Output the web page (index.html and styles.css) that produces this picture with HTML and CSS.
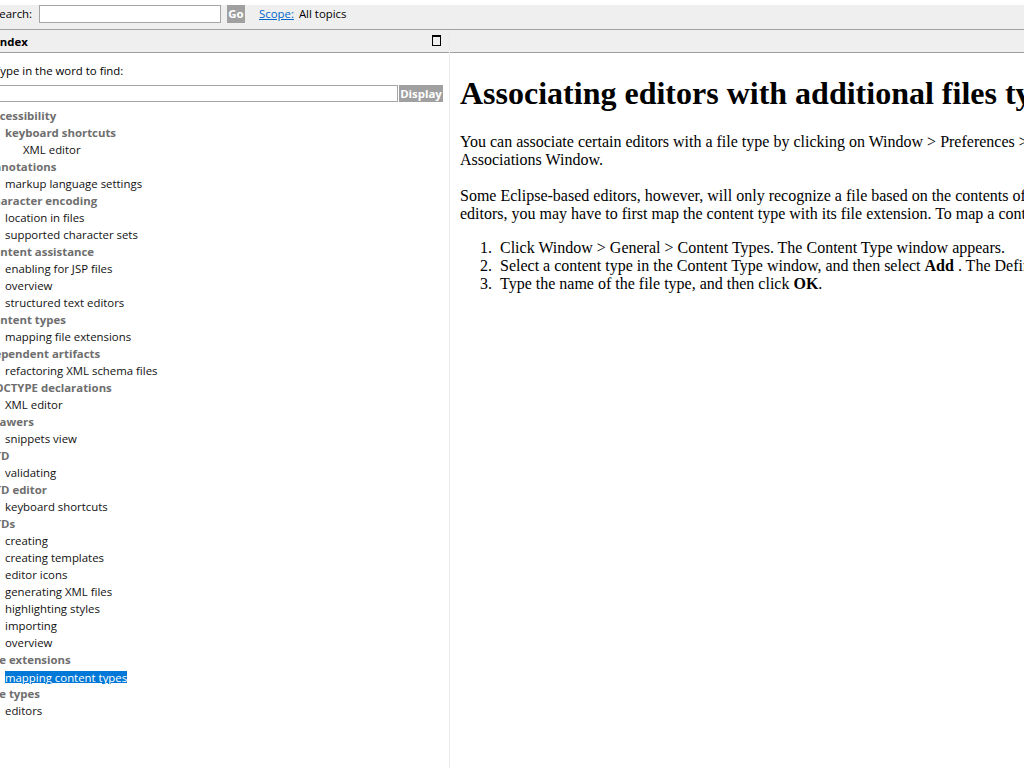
FILE: index.html
```html
<!DOCTYPE html>
<html lang="en">
<head>
<meta charset="utf-8">
<title>Help - Index</title>
<link rel="stylesheet" href="styles.css">
</head>
<body>
<div class="toolbar">
  <label class="search-label" for="q">Search:</label>
  <input class="search-input" id="q" type="text">
  <button class="btn btn-go" type="button">Go</button>
  <a class="scope-link" href="#">Scope:</a>
  <span class="scope-value">All topics</span>
</div>
<div class="main">
  <div class="nav">
    <div class="nav-header">
      <span class="nav-title">Index</span>
      <svg class="max-icon" width="9" height="11" viewBox="0 0 9 11" aria-hidden="true">
        <rect x="0.5" y="0.5" width="8" height="10" fill="none" stroke="#000" stroke-width="1"/>
        <rect x="0.5" y="1" width="8" height="1" fill="#000"/>
      </svg>
    </div>
    <div class="nav-body">
      <div class="find-label">Type in the word to find:</div>
      <div class="find-row">
        <input class="find-input" type="text">
        <button class="btn btn-display" type="button">Display</button>
      </div>
      <ul class="tree">
        <li class="l0 grp">Accessibility</li>
        <li class="l1 grp">keyboard shortcuts</li>
        <li class="l2">XML editor</li>
        <li class="l0 grp">Annotations</li>
        <li class="l1">markup language settings</li>
        <li class="l0 grp">Character encoding</li>
        <li class="l1">location in files</li>
        <li class="l1">supported character sets</li>
        <li class="l0 grp">Content assistance</li>
        <li class="l1">enabling for JSP files</li>
        <li class="l1">overview</li>
        <li class="l1">structured text editors</li>
        <li class="l0 grp">Content types</li>
        <li class="l1">mapping file extensions</li>
        <li class="l0 grp">Dependent artifacts</li>
        <li class="l1">refactoring XML schema files</li>
        <li class="l0 grp">DOCTYPE declarations</li>
        <li class="l1">XML editor</li>
        <li class="l0 grp">Drawers</li>
        <li class="l1">snippets view</li>
        <li class="l0 grp">DTD</li>
        <li class="l1">validating</li>
        <li class="l0 grp">DTD editor</li>
        <li class="l1">keyboard shortcuts</li>
        <li class="l0 grp">DTDs</li>
        <li class="l1">creating</li>
        <li class="l1">creating templates</li>
        <li class="l1">editor icons</li>
        <li class="l1">generating XML files</li>
        <li class="l1">highlighting styles</li>
        <li class="l1">importing</li>
        <li class="l1">overview</li>
        <li class="l0 grp">File extensions</li>
        <li class="l1"><a class="selected" href="#">mapping content types</a></li>
        <li class="l0 grp">File types</li>
        <li class="l1">editors</li>
      </ul>
    </div>
  </div>
  <div class="divider"></div>
  <div class="content">
    <div class="content-header"></div>
    <div class="topic">
      <h1>Associating editors with additional files types</h1>
      <p class="intro">You can associate certain editors with a file type by clicking on Window &gt; Preferences &gt; General &gt; Editors &gt; File Associations. The File<br>Associations Window.</p>
      <p>Some Eclipse-based editors, however, will only recognize a file based on the contents of the file, rather than the file extension. For these<br>editors, you may have to first map the content type with its file extension. To map a content type to a file extension, complete the following steps:</p>
      <ol>
        <li>Click Window &gt; General &gt; Content Types. The Content Type window appears.</li>
        <li>Select a content type in the Content Type window, and then select <b>Add</b> . The Define a New File Type window appears.</li>
        <li>Type the name of the file type, and then click <b>OK</b>.</li>
      </ol>
    </div>
  </div>
</div>
</body>
</html>
```

FILE: styles.css
```css
html, body {
  margin: 0;
  padding: 0;
  height: 768px;
  overflow: hidden;
  background: #fff;
}

body {
  padding-top: 5px;
  box-sizing: border-box;
  font-family: "Open Sans", "Noto Sans", sans-serif;
  font-size: 11.4px;
  color: #000;
}

/* top search bar */
.toolbar {
  display: flex;
  align-items: flex-start;
  height: 24px;
  background: #efefef;
  border-bottom: 1px solid #a0a0a0;
  white-space: nowrap;
}

.search-label {
  width: 46px;
  margin-left: -7px;
  line-height: 18px;
  flex: none;
}

.search-input {
  width: 182px;
  height: 18px;
  box-sizing: border-box;
  margin: 0;
  border: 1px solid #a5a5a5;
  background: #fff;
  padding: 0 2px;
  flex: none;
}

.btn {
  margin: 0;
  padding: 0 2px;
  border: none;
  background: #a0a0a0;
  color: #fff;
  font-family: inherit;
  font-size: 11.4px;
  font-weight: bold;
  height: 18px;
  line-height: 18px;
  flex: none;
}

.btn-go {
  margin-left: 6px;
  width: 18px;
  padding: 0;
}

.scope-link {
  margin-left: 14px;
  line-height: 18px;
  color: #0066cc;
  text-decoration: underline;
}

.scope-value {
  margin-left: 5px;
  line-height: 18px;
}

/* main area */
.main {
  display: flex;
  height: 739px;
}

.nav {
  width: 449px;
  flex: none;
  overflow: hidden;
}

.divider {
  width: 1px;
  flex: none;
  background: #ebebeb;
}

.content {
  flex: 1;
  min-width: 0;
  overflow: hidden;
}

.nav-header,
.content-header {
  height: 22px;
  background: #efefef;
  border-bottom: 1px solid #a0a0a0;
}

.nav-header {
  display: flex;
  align-items: center;
  justify-content: space-between;
  padding-right: 8px;
}

.nav-title {
  margin-left: -4px;
  font-weight: bold;
}

.max-icon {
  display: block;
  margin-top: -1px;
}

.nav-body {
  padding-top: 9px;
  white-space: nowrap;
}

.find-label {
  margin-left: -6px;
  line-height: 17px;
}

.find-row {
  display: flex;
  margin-top: 6px;
  margin-left: -7px;
  gap: 1px;
}

.find-input {
  width: 405px;
  height: 17px;
  box-sizing: border-box;
  margin: 0;
  border: 1px solid #a5a5a5;
  padding: 0;
  flex: none;
}

.btn-display {
  height: 17px;
  line-height: 17px;
  width: 44px;
  padding: 0;
}

.tree {
  list-style: none;
  margin: 5px 0 0;
  padding: 0;
}

.tree li {
  line-height: 17px;
  height: 17px;
  color: #111;
}

.tree .grp {
  font-weight: bold;
  color: #6e6e6e;
}

.tree .l0 { margin-left: -14px; }
.tree .l1 { padding-left: 5px; }
.tree .l2 { padding-left: 23px; }

.selected {
  display: inline-block;
  line-height: 13px;
  vertical-align: middle;
  background: #0078d7;
  color: #fff;
  text-decoration: underline;
}

/* topic pane */
.topic {
  padding: 0 10px;
  font-family: "Liberation Serif", "Times New Roman", serif;
  font-size: 16px;
  white-space: nowrap;
}

.topic h1 {
  font-size: 32px;
  font-weight: bold;
  margin: 22px 0 21px;
}

.topic p {
  margin: 16px 0;
}

.topic .intro {
  margin-bottom: 18px;
}

.topic ol {
  margin: 16px 0;
  padding-left: 40px;
}

.topic ol li::marker {
  content: counter(list-item) ".\00a0\00a0";
}
```
